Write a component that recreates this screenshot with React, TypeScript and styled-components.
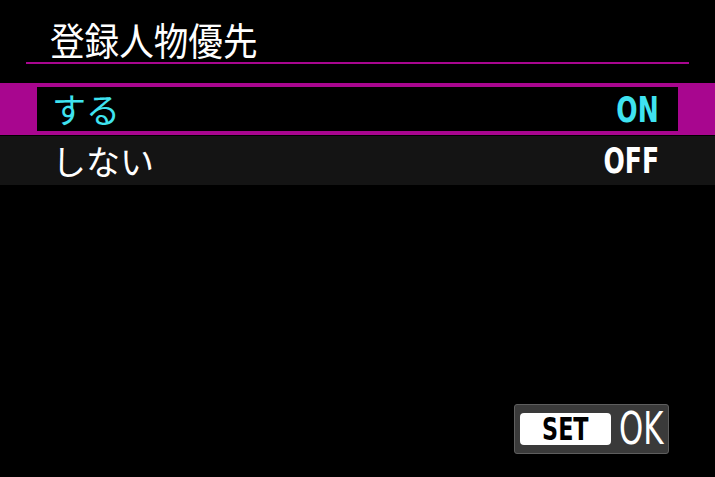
import React from 'react';
import styled, { createGlobalStyle } from 'styled-components';

const GlobalStyle = createGlobalStyle`
  html, body {
    margin: 0;
    padding: 0;
    background: #000;
  }
`;

const Screen = styled.div`
  width: 715px;
  height: 477px;
  background: #000;
  display: flex;
  flex-direction: column;
  overflow: hidden;
  font-family: "Noto Sans CJK JP", "Noto Sans", sans-serif;
  color: #fff;
`;

const Header = styled.div`
  height: 62px;
  display: flex;
  align-items: flex-end;
  padding-left: 50px;
  box-sizing: border-box;
`;

const Title = styled.h1`
  margin: 0 0 4px;
  font-size: 38px;
  font-weight: 400;
  line-height: 1;
  transform: scaleX(0.91);
  transform-origin: left bottom;
  white-space: nowrap;
`;

const Divider = styled.div`
  margin: 0 26px 19px;
  height: 2px;
  background: #a8068f;
`;

const List = styled.div`
  display: flex;
  flex-direction: column;
`;

const Row = styled.div<{ $selected?: boolean }>`
  background: ${(p) => (p.$selected ? '#a8068f' : '#141414')};
  padding: ${(p) => (p.$selected ? '4px 37px' : '0 37px')};
  margin-top: ${(p) => (p.$selected ? '0' : '1px')};
`;

const RowInner = styled.div<{ $selected?: boolean }>`
  height: ${(p) => (p.$selected ? '44px' : '49px')};
  background: ${(p) => (p.$selected ? '#000' : 'transparent')};
  display: flex;
  align-items: center;
  justify-content: space-between;
  padding: 0 19px 0 15px;
  color: ${(p) => (p.$selected ? '#3fe3f0' : '#fff')};
`;

const Label = styled.span`
  font-size: 34px;
  font-weight: 400;
  line-height: 1;
`;

const Value = styled.span`
  display: inline-block;
  font-family: "DejaVu Sans", sans-serif;
  font-weight: 700;
  font-size: 33px;
  line-height: 1;
  transform: scale(0.76, 1.05);
  transform-origin: right center;
`;

const Footer = styled.div`
  margin-top: auto;
  display: flex;
  justify-content: flex-end;
  padding: 0 46px 23px 0;
`;

const SetButton = styled.div`
  width: 155px;
  height: 50px;
  box-sizing: border-box;
  background: #3a3a3a;
  border: 1.5px solid #5e5e5e;
  border-radius: 3px;
  display: flex;
  align-items: center;
  padding-left: 5px;
  gap: 8px;
  overflow: hidden;
`;

const SetKey = styled.span`
  flex-shrink: 0;
  width: 91px;
  height: 32px;
  background: #fff;
  border-radius: 4px;
  color: #000;
  display: flex;
  align-items: center;
  justify-content: center;
`;

const SetText = styled.span`
  display: inline-block;
  font-family: "DejaVu Sans", sans-serif;
  font-weight: 700;
  font-size: 31px;
  line-height: 1;
  transform: scale(0.72, 1.02);
`;

const OkText = styled.span`
  display: inline-block;
  font-family: "DejaVu Sans", sans-serif;
  font-size: 44px;
  line-height: 1;
  color: #fff;
  transform: scaleX(0.7);
  transform-origin: left center;
`;

const options = [
  { label: 'する', value: 'ON', selected: true },
  { label: 'しない', value: 'OFF', selected: false },
];

const App: React.FC = () => {
  return (
    <>
      <GlobalStyle />
      <Screen>
        <Header>
          <Title>登録人物優先</Title>
        </Header>
        <Divider />
        <List>
          {options.map((o) => (
            <Row key={o.value} $selected={o.selected}>
              <RowInner $selected={o.selected}>
                <Label>{o.label}</Label>
                <Value>{o.value}</Value>
              </RowInner>
            </Row>
          ))}
        </List>
        <Footer>
          <SetButton>
            <SetKey>
              <SetText>SET</SetText>
            </SetKey>
            <OkText>OK</OkText>
          </SetButton>
        </Footer>
      </Screen>
    </>
  );
};

export default App;
